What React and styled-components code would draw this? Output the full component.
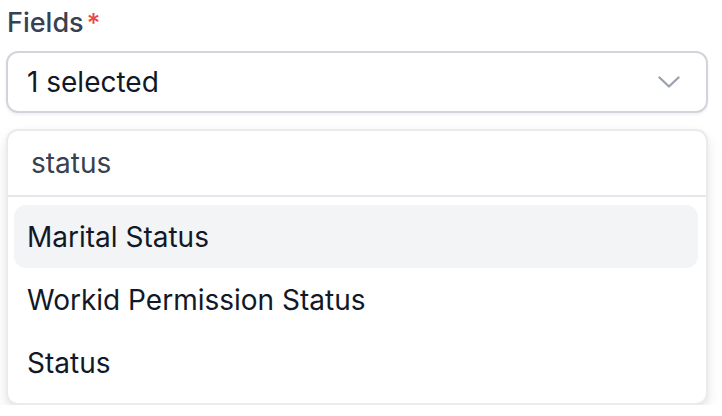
import React from 'react'
import styled, { createGlobalStyle } from 'styled-components'

const GlobalStyle = createGlobalStyle`
  body {
    margin: 0;
    background: #ffffff;
    font-family: Inter, "Noto Sans", sans-serif;
  }
`

const Wrapper = styled.div`
  width: 702px;
  padding: 6px 0 0 6px;
  display: flex;
  flex-direction: column;
`

const Label = styled.label`
  display: flex;
  align-items: flex-start;
  gap: 3px;
  font-size: 27px;
  font-weight: 500;
  color: #374151;
  line-height: 34px;
  margin-left: 1px;
`

const Required = styled.span`
  color: #ef4444;
  font-size: 26px;
`

const SelectBox = styled.div`
  margin-top: 11px;
  height: 58px;
  border: 2px solid #d1d5db;
  border-radius: 12px;
  display: flex;
  align-items: center;
  justify-content: space-between;
  padding: 0 26px 0 19px;
  box-shadow: 0 2px 3px rgba(0, 0, 0, 0.06);
  font-size: 28px;
  color: #111827;
`

const Panel = styled.div`
  margin-top: 16px;
  border: 2px solid #ebebeb;
  border-radius: 12px;
  background: #ffffff;
  box-shadow: 0 8px 16px rgba(0, 0, 0, 0.08), 0 2px 6px rgba(0, 0, 0, 0.05);
  overflow: hidden;
`

const Search = styled.div`
  height: 64px;
  display: flex;
  align-items: center;
  padding-left: 23px;
  border-bottom: 2px solid #e5e7eb;
  font-size: 28px;
  color: #374151;
`

const List = styled.ul`
  list-style: none;
  margin: 0;
  padding: 8px 8px 9px 6px;
`

const Option = styled.li`
  height: 63px;
  display: flex;
  align-items: center;
  padding-left: 13px;
  border-radius: 12px;
  font-size: 28px;
  color: #111827;
  background: ${p => (p.$active ? '#f3f4f6' : 'transparent')};
`

const Chevron = () => (
  <svg width="22" height="12" viewBox="0 0 22 12" fill="none">
    <path d="M1.5 1.5L11 10.5L20.5 1.5" stroke="#9ca3af" strokeWidth="2.4" strokeLinecap="round" strokeLinejoin="round" />
  </svg>
)

const options = ['Marital Status', 'Workid Permission Status', 'Status']

export default function App() {
  return (
    <>
      <GlobalStyle />
      <Wrapper>
        <Label>
          Fields<Required>*</Required>
        </Label>
        <SelectBox>
          <span>1 selected</span>
          <Chevron />
        </SelectBox>
        <Panel>
          <Search>status</Search>
          <List>
            {options.map((o, i) => (
              <Option key={o} $active={i === 0}>{o}</Option>
            ))}
          </List>
        </Panel>
      </Wrapper>
    </>
  )
}
